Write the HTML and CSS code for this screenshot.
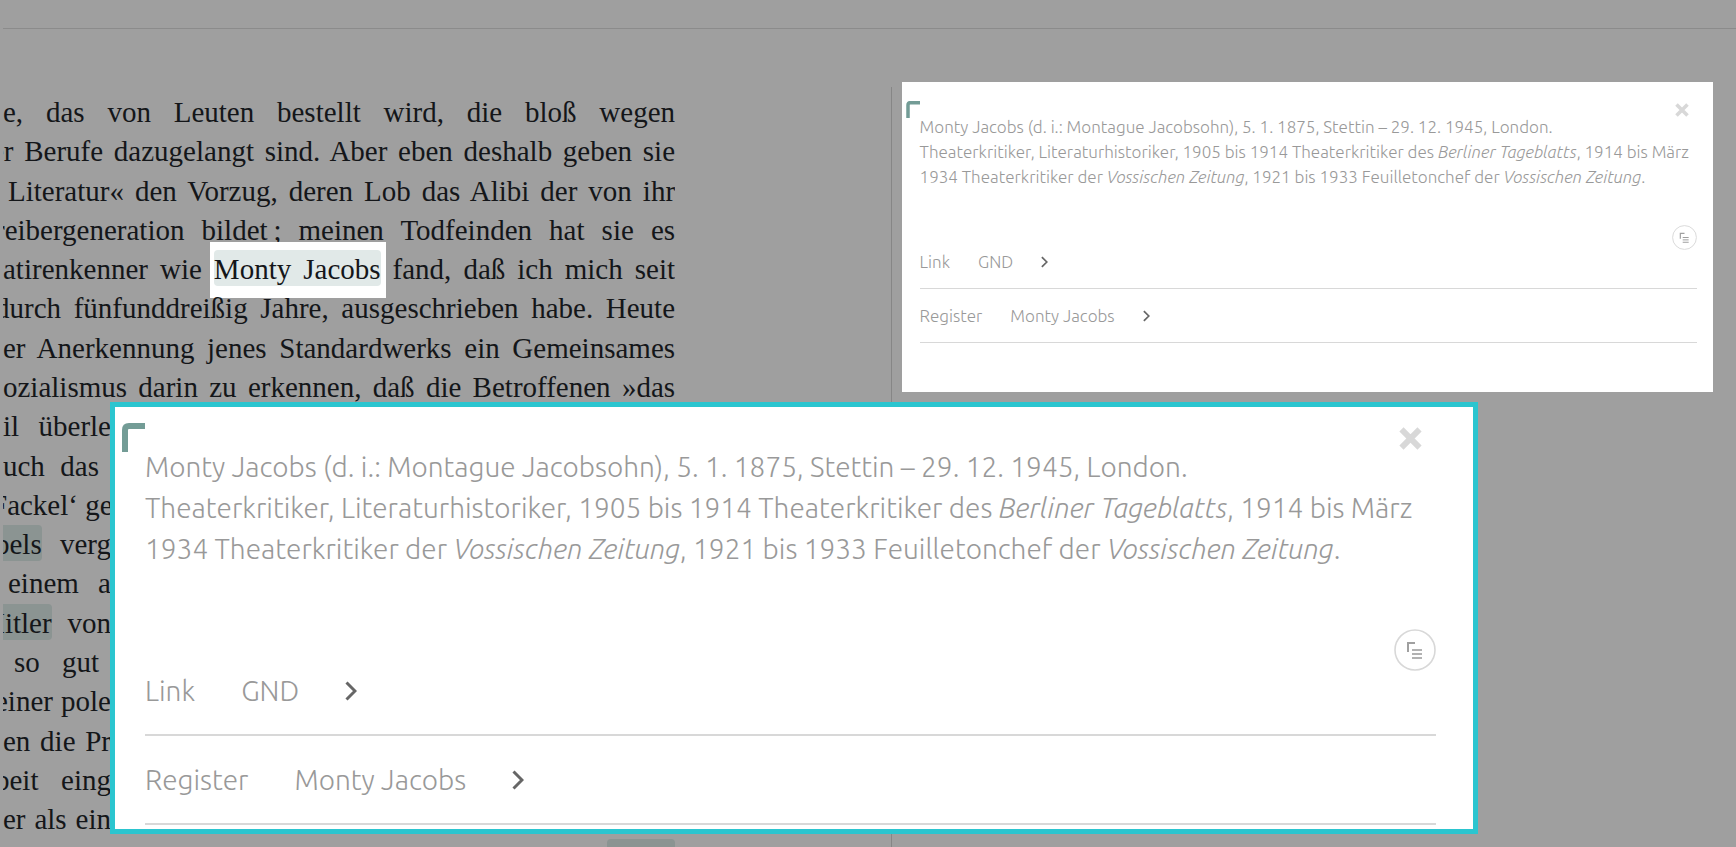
FILE: index.html
```html
<!DOCTYPE html>
<html lang="de">
<head>
<meta charset="utf-8">
<title>Monty Jacobs</title>
<link rel="stylesheet" href="styles.css">
</head>
<body>
<header class="topbar"></header>
<main class="reader">
  <article class="text">
    <p class="line">e, das von Leuten bestellt wird, die bloß wegen</p>
    <p class="line cut deep">er Berufe dazugelangt sind. Aber eben deshalb geben sie</p>
    <p class="line inset">Literatur« den Vorzug, deren Lob das Alibi der von ihr</p>
    <p class="line cut">reibergeneration bildet&#8201;; meinen Todfeinden hat sie es</p>
    <p class="line">atirenkenner wie <span class="spot"><a class="entity lit" href="#note">Monty Jacobs</a></span> fand, daß ich mich seit</p>
    <p class="line cut">durch fünfunddreißig Jahre, ausgeschrieben habe. Heute</p>
    <p class="line">er Anerkennung jenes Standardwerks ein Gemeinsames</p>
    <p class="line">ozialismus darin zu erkennen, daß die Betroffenen »das</p>
    <p class="line part">il überle</p>
    <p class="line part short">uch das</p>
    <p class="line part cut deep">Fackel‘ ge</p>
    <p class="line part cut"><a class="entity" href="#b">bels</a> verg</p>
    <p class="line part inset">einem a</p>
    <p class="line part cut deeper"><a class="entity" href="#h">Hitler</a> von</p>
    <p class="line part short inset wide">so gut</p>
    <p class="line part cut">einer pole</p>
    <p class="line part">en die Pr</p>
    <p class="line part cut">beit eing</p>
    <p class="line part">er als ein</p>
    <p class="line last"><a class="entity blank" href="#x" aria-label="Eintrag"></a></p>
  </article>
  <div class="divider"></div>
  <aside class="side">
    <section class="note" id="note">
      <svg class="corner" viewBox="0 0 14 17" aria-hidden="true"><path d="M2 17V4Q2 1.700 4.300 1.700H14" fill="none" stroke="#739c96" stroke-width="3.500"/></svg>
      <button class="close" aria-label="Schließen"><svg viewBox="0 0 14 14"><path d="M1.500 1.500L12.500 12.500M12.500 1.500L1.500 12.500" stroke="#d8d8d8" stroke-width="3.600"/></svg></button>
      <p class="bio">Monty Jacobs (d. i.: Montague Jacobsohn), 5. 1. 1875, Stettin – 29. 12. 1945, London.<br>Theaterkritiker, Literaturhistoriker, 1905 bis 1914 Theaterkritiker des <i>Berliner Tageblatts</i>, 1914 bis März<br>1934 Theaterkritiker der <i>Vossischen Zeitung</i>, 1921 bis 1933 Feuilletonchef der <i>Vossischen Zeitung</i>.</p>
      <button class="cite" aria-label="Zitieren"><svg viewBox="0 0 42 42"><circle cx="21" cy="21" r="20" fill="none" stroke="#d8d8d8" stroke-width="1.600"/><path d="M14 23V14H21" fill="none" stroke="#a0a0a0" stroke-width="2"/><path d="M18 21H28M18 25H28M18 29H28" stroke="#999" stroke-width="1.600"/></svg></button>
      <div class="row"><span>Link</span><a href="#gnd">GND</a><svg class="chev" viewBox="0 0 12 20" aria-hidden="true"><path d="M1.500 1.500L10 10L1.500 18.500" fill="none" stroke="#666" stroke-width="3"/></svg></div>
      <div class="row"><span>Register</span><a href="#register">Monty Jacobs</a><svg class="chev" viewBox="0 0 12 20" aria-hidden="true"><path d="M1.500 1.500L10 10L1.500 18.500" fill="none" stroke="#666" stroke-width="3"/></svg></div>
    </section>
  </aside>
</main>
<section class="note large">
  <svg class="corner" viewBox="0 0 23 29" aria-hidden="true"><path d="M3 29V7Q3 3 7 3H23" fill="none" stroke="#739c96" stroke-width="6"/></svg>
  <button class="close" aria-label="Schließen"><svg viewBox="0 0 14 14"><path d="M1.500 1.500L12.500 12.500M12.500 1.500L1.500 12.500" stroke="#d8d8d8" stroke-width="3.600"/></svg></button>
  <p class="bio">Monty Jacobs (d. i.: Montague Jacobsohn), 5. 1. 1875, Stettin – 29. 12. 1945, London.<br>Theaterkritiker, Literaturhistoriker, 1905 bis 1914 Theaterkritiker des <i>Berliner Tageblatts</i>, 1914 bis März<br>1934 Theaterkritiker der <i>Vossischen Zeitung</i>, 1921 bis 1933 Feuilletonchef der <i>Vossischen Zeitung</i>.</p>
  <button class="cite" aria-label="Zitieren"><svg viewBox="0 0 42 42"><circle cx="21" cy="21" r="20" fill="none" stroke="#d8d8d8" stroke-width="1.600"/><path d="M14 23V14H21" fill="none" stroke="#a0a0a0" stroke-width="2"/><path d="M18 21H28M18 25H28M18 29H28" stroke="#999" stroke-width="1.600"/></svg></button>
  <div class="row"><span>Link</span><a href="#gnd">GND</a><svg class="chev" viewBox="0 0 12 20" aria-hidden="true"><path d="M1.500 1.500L10 10L1.500 18.500" fill="none" stroke="#666" stroke-width="3"/></svg></div>
  <div class="row"><span>Register</span><a href="#register">Monty Jacobs</a><svg class="chev" viewBox="0 0 12 20" aria-hidden="true"><path d="M1.500 1.500L10 10L1.500 18.500" fill="none" stroke="#666" stroke-width="3"/></svg></div>
</section>
</body>
</html>
```
FILE: styles.css
```css
* { box-sizing: border-box; }
body {
  margin: 0;
  height: 100vh;
  overflow: hidden;
  position: relative;
  display: flex;
  flex-direction: column;
  background: #9f9f9f;
}
a { color: inherit; text-decoration: none; }
button { border: 0; padding: 0; background: none; cursor: pointer; }
svg { display: block; }

.topbar { flex: none; height: 29px; margin-left: 3px; border-bottom: 1px solid #8b8b8b; }
.reader {
  flex: 1;
  min-height: 0;
  display: grid;
  grid-template-columns: 51.3% 1px 1fr;
  padding-top: 53px;
}

/* Running text */
.text {
  margin: 0 24.2% 0 3px;
  padding-top: 11px;
  min-height: 0;
  overflow-x: clip;
  color: #141619;
  font: 29px/1.355 "Liberation Serif", "Times New Roman", serif;
}
.line { margin: 0; white-space: nowrap; text-align: justify; text-align-last: justify; }
.cut { text-indent: -8px; }
.deep { text-indent: -12px; }
.deeper { text-indent: -19px; }
.inset { padding-left: 5px; }
.wide { padding-left: 11px; }
.part { width: 108px; }
.short { padding-right: 12px; }
.last { text-align-last: right; }
.entity { padding: 3px 0 1px; border-radius: 4px; background: #8b9492; }
.spot { margin: 0 -5px 0 -4px; padding: 11px 5px 13px 4px; background: #fff; }
.lit { background: #e1e9e8; }
.blank { display: inline-block; width: 68px; height: 36px; }

.divider { margin-top: 5px; background: #868686; }
.side { padding: 0 23px 0 10px; }

/* Annotation card */
.note {
  position: relative;
  padding: 32px 16px 49px 18px;
  background: #fff;
  color: #999;
  font: 300 17px/25px Ubuntu, "Open Sans", sans-serif;
}
.bio { margin: 0; white-space: nowrap; }
.corner { position: absolute; left: 4px; top: 19px; width: 14px; height: 17px; }
.close { position: absolute; right: 24px; top: 21px; width: 14px; height: 14px; }
.cite { display: block; width: 25px; height: 25px; margin: 36px 0 -1px auto; }
.row { display: flex; align-items: center; gap: 28px; padding-bottom: 14px; border-bottom: 1px solid #d8d8d8; }
.row + .row { padding-top: 14px; }
.chev { width: 7px; height: 12px; }

.large {
  position: absolute;
  left: 110px;
  right: 258px;
  top: 402px;
  padding: 39px 37px 4px 30px;
  border: 5px solid #2bc5cf;
  font-size: 28px;
  line-height: 41px;
}
.large .corner { left: 7px; top: 16px; width: 23px; height: 29px; }
.large .close { right: 51px; top: 20px; width: 23px; height: 23px; }
.large .cite { width: 42px; height: 42px; margin-top: 60px; }
.large .row { gap: 46px; padding-bottom: 23px; border-bottom-width: 2px; }
.large .row + .row { padding-top: 23px; }
.large .chev { width: 12px; height: 20px; }
.close svg, .cite svg { width: 100%; height: 100%; }
```
